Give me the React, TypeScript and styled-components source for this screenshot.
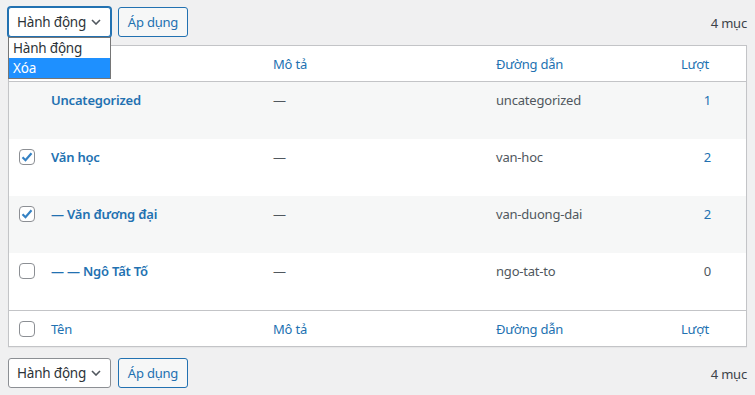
import React from 'react';
import styled, { createGlobalStyle } from 'styled-components';

interface Term {
    name: string;
    slug: string;
    count: number;
    checked?: boolean;
    noCheck?: boolean;
}

const terms: Term[] = [
    { name: 'Uncategorized', slug: 'uncategorized', count: 1, noCheck: true },
    { name: 'Văn học', slug: 'van-hoc', count: 2, checked: true },
    { name: '— Văn đương đại', slug: 'van-duong-dai', count: 2, checked: true },
    { name: '— — Ngô Tất Tố', slug: 'ngo-tat-to', count: 0 },
];

const Chevron = () => (
    <svg width="10" height="6" viewBox="0 0 10 6">
        <path d="M1 1l4 4 4-4" fill="none" stroke="#50575e" strokeWidth="1.6" />
    </svg>
);

const Check = () => (
    <svg width="12" height="10" viewBox="0 0 12 10">
        <path d="M1.5 5.2l3 3 6-7" fill="none" stroke="#3582c4" strokeWidth="2.2" />
    </svg>
);

const TableNav: React.FC<{ open?: boolean }> = ({ open }) => (
    <Nav>
        <SelectWrap>
            <Select $focus={open}>
                Hành động
                <Chevron />
            </Select>
            {open && (
                <Options>
                    <Option>Hành động</Option>
                    <Option $active>Xóa</Option>
                </Options>
            )}
        </SelectWrap>
        <ApplyButton>Áp dụng</ApplyButton>
        <Count>4 mục</Count>
    </Nav>
);

const HeadRow: React.FC<{ footer?: boolean }> = ({ footer }) => (
    <Head $footer={footer}>
        <CheckCell>
            {footer && <Box />}
        </CheckCell>
        <HeadCell>{footer ? 'Tên' : ''}</HeadCell>
        <HeadCell>Mô tả</HeadCell>
        <HeadCell>Đường dẫn</HeadCell>
        <HeadCell $right>Lượt</HeadCell>
    </Head>
);

const App: React.FC = () => (
    <Page>
        <GlobalStyle />
        <TableNav open />
        <Table>
            <HeadRow />
            {terms.map((t, i) => (
                <Row key={t.slug} $alt={i % 2 === 0}>
                    <CheckCell>
                        {!t.noCheck && <Box>{t.checked && <Check />}</Box>}
                    </CheckCell>
                    <NameCell>{t.name}</NameCell>
                    <Cell>—</Cell>
                    <Cell>{t.slug}</Cell>
                    <CountCell $link={t.count > 0}>{t.count}</CountCell>
                </Row>
            ))}
            <HeadRow footer />
        </Table>
        <Bottom>
            <TableNav />
        </Bottom>
    </Page>
);

const GlobalStyle = createGlobalStyle`
    body {
        margin: 0;
        background: #f0f0f1;
        font-family: "Noto Sans", "Liberation Sans", sans-serif;
        font-size: 13px;
        letter-spacing: -0.2px;
        color: #3c434a;
    }
`;

const Page = styled.div`
    padding: 7px 8px 0 8px;
`;

const Nav = styled.div`
    display: flex;
    align-items: center;
    gap: 7px;
    height: 30px;
`;

const Bottom = styled.div`
    margin-top: 11px;
`;

const SelectWrap = styled.div`
    position: relative;
`;

const Select = styled.div<{ $focus?: boolean }>`
    box-sizing: border-box;
    width: 103px;
    height: 30px;
    display: flex;
    align-items: center;
    justify-content: space-between;
    padding: 0 9px 0 8px;
    white-space: nowrap;
    background: #fff;
    color: #2c3338;
    border: 1px solid ${(p) => (p.$focus ? '#2271b1' : '#8c8f94')};
    border-radius: 3px;
    box-shadow: ${(p) => (p.$focus ? '0 0 0 1px #2271b1' : 'none')};
    font-size: 13.5px;
`;

const Options = styled.div`
    position: absolute;
    top: 30px;
    left: 0;
    width: 103px;
    box-sizing: border-box;
    background: #fff;
    border: 1px solid #767676;
    z-index: 2;
`;

const Option = styled.div<{ $active?: boolean }>`
    height: 20px;
    line-height: 20px;
    padding: 0 4px;
    font-size: 13.5px;
    white-space: nowrap;
    color: ${(p) => (p.$active ? '#fff' : '#2c3338')};
    background: ${(p) => (p.$active ? '#1e90ff' : '#fff')};
`;

const ApplyButton = styled.div`
    box-sizing: border-box;
    width: 70px;
    height: 30px;
    display: flex;
    align-items: center;
    justify-content: center;
    border: 1px solid #2271b1;
    border-radius: 3px;
    background: #f6f7f7;
    color: #2271b1;
    white-space: nowrap;
`;

const Count = styled.div`
    margin-left: auto;
    color: #3c434a;
    padding-top: 2px;
`;

const Table = styled.div`
    margin-top: 8px;
    background: #fff;
    border: 1px solid #c3c4c7;
    box-shadow: 0 1px 1px rgba(0, 0, 0, 0.04);
`;

const Grid = styled.div`
    display: grid;
    grid-template-columns: 32px 222px 223px 1fr 76px;
`;

const Head = styled(Grid)<{ $footer?: boolean }>`
    box-sizing: border-box;
    height: 36px;
    align-items: center;
    ${(p) => (p.$footer ? 'border-top: 1px solid #c3c4c7;' : 'border-bottom: 1px solid #c3c4c7;')}
`;

const Row = styled(Grid)<{ $alt?: boolean }>`
    height: 57px;
    align-items: start;
    background: ${(p) => (p.$alt ? '#f6f7f7' : '#fff')};
`;

const CheckCell = styled.div`
    display: flex;
    align-items: center;
    padding-left: 10px;
    height: 36px;
`;

const Box = styled.div`
    box-sizing: border-box;
    width: 16px;
    height: 16px;
    border: 1px solid #8c8f94;
    border-radius: 4px;
    background: #fff;
    display: flex;
    align-items: center;
    justify-content: center;
`;

const HeadCell = styled.div<{ $right?: boolean }>`
    padding: 0 ${(p) => (p.$right ? '37px' : '10px')} 0 10px;
    text-align: ${(p) => (p.$right ? 'right' : 'left')};
    color: #2271b1;
    line-height: 20px;
`;

const Cell = styled.div`
    padding: 8px 10px;
    line-height: 20px;
    color: #50575e;
`;

const NameCell = styled(Cell)`
    color: #2271b1;
    font-weight: 600;
`;

const CountCell = styled(Cell)<{ $link?: boolean }>`
    text-align: right;
    padding-right: 35px;
    color: ${(p) => (p.$link ? '#2271b1' : '#50575e')};
`;

export default App;
